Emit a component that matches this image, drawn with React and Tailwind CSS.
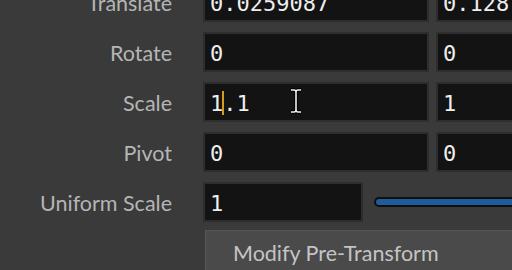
const rows = [
  { label: "Translate", values: ["0.0259087", "0.128"] },
  { label: "Rotate", values: ["0", "0"] },
  { label: "Scale", values: ["1.1", "1"], editing: true },
  { label: "Pivot", values: ["0", "0"] },
];

const Field = ({ value, editing, className = "" }) => (
  <div
    className={`relative h-[40px] shrink-0 bg-[#131313] border-2 border-[#2e2e2e] flex items-center pl-[5px] pt-[2px] ${className}`}
  >
    {editing ? (
      <span className="flex items-center">
        <span>1</span>
        <span className="w-[2px] h-[24px] bg-[#d99a1e] -mx-[1px]" />
        <span>.1</span>
      </span>
    ) : (
      <span>{value}</span>
    )}
  </div>
);

const App = () => {
  return (
    <div
      className="w-[512px] h-[270px] overflow-hidden bg-[#3a3a3a] relative"
      style={{ fontFamily: "Lato, 'Noto Sans', sans-serif" }}
    >
      <div className="-mt-[18px] flex flex-col gap-[10px]">
        {rows.map((row) => (
          <div key={row.label} className="flex items-center h-[40px]">
            <div className="w-[173px] shrink-0 text-right text-[21.5px] text-[#b5b5b5] pr-[1px] pt-[2px]">
              {row.label}
            </div>
            <div
              className="ml-[30px] flex gap-[7px] text-[22px] text-[#eeeeee] font-medium"
              style={{ fontFamily: "'DejaVu Sans Mono', monospace" }}
            >
              <Field value={row.values[0]} editing={row.editing} className="w-[226px]" />
              <Field value={row.values[1]} className="w-[226px]" />
            </div>
          </div>
        ))}
        <div className="flex items-center h-[40px]">
          <div className="w-[173px] shrink-0 text-right text-[21.5px] text-[#b5b5b5] pr-[1px] pt-[2px]">
            Uniform Scale
          </div>
          <div
            className="ml-[30px] text-[22px] text-[#eeeeee]"
            style={{ fontFamily: "'DejaVu Sans Mono', monospace" }}
          >
            <Field value="1" className="w-[160px]" />
          </div>
          <div className="ml-[11px] flex-1 h-[10px] rounded-l-full bg-[#0e0e0e] p-[2px] -mr-[20px]">
            <div className="h-full rounded-l-full bg-[#1f5c9c]" />
          </div>
        </div>
        <div className="flex -mt-[2px]">
          <div className="ml-[205px] w-[320px] h-[44px] shrink-0 bg-[#4a4a4a] border-t border-l border-[#575757] text-[21.5px] text-[#c4c4c4] pl-[27px] pt-[6px]">
            Modify Pre-Transform
          </div>
        </div>
      </div>
      <svg
        className="absolute left-[289px] top-[88px]"
        width="14"
        height="26"
        viewBox="0 0 14 26"
      >
        <path
          d="M2 2 H5 Q7 2 7 4 V22 Q7 24 5 24 H2 M12 2 H9 Q7 2 7 4 M7 22 Q7 24 9 24 H12"
          fill="none"
          stroke="#000"
          strokeWidth="3.5"
        />
        <path
          d="M2 2 H5 Q7 2 7 4 V22 Q7 24 5 24 H2 M12 2 H9 Q7 2 7 4 M7 22 Q7 24 9 24 H12"
          fill="none"
          stroke="#f2f2f2"
          strokeWidth="1.6"
        />
      </svg>
    </div>
  );
};

export default App;
